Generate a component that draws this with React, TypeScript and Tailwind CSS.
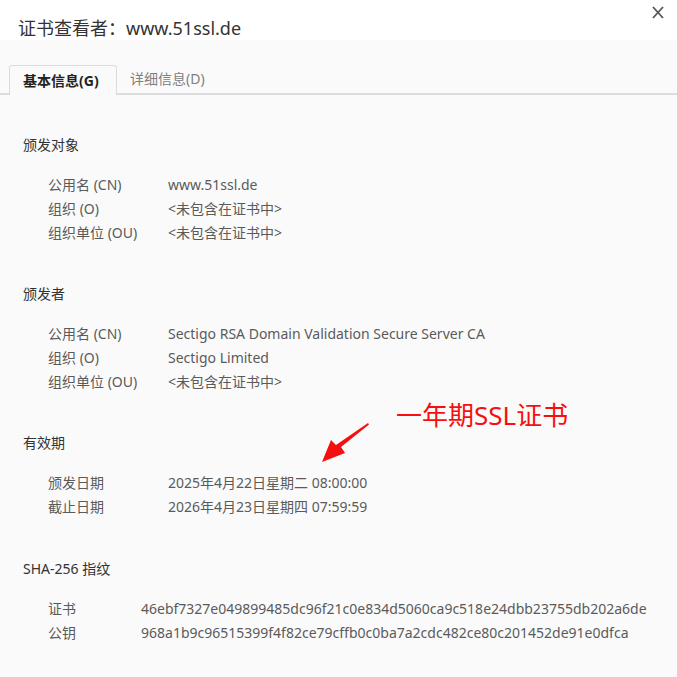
import React from "react";

type Row = { label: string; value: string };

const font = { fontFamily: '"Noto Sans", "Noto Sans CJK SC", sans-serif' };

const subject: Row[] = [
  { label: "公用名 (CN)", value: "www.51ssl.de" },
  { label: "组织 (O)", value: "<未包含在证书中>" },
  { label: "组织单位 (OU)", value: "<未包含在证书中>" },
];

const issuer: Row[] = [
  { label: "公用名 (CN)", value: "Sectigo RSA Domain Validation Secure Server CA" },
  { label: "组织 (O)", value: "Sectigo Limited" },
  { label: "组织单位 (OU)", value: "<未包含在证书中>" },
];

const validity: Row[] = [
  { label: "颁发日期", value: "2025年4月22日星期二 08:00:00" },
  { label: "截止日期", value: "2026年4月23日星期四 07:59:59" },
];

const sha: Row[] = [
  { label: "证书", value: "46ebf7327e049899485dc96f21c0e834d5060ca9c518e24dbb23755db202a6de" },
  { label: "公钥", value: "968a1b9c96515399f4f82ce79cffb0c0ba7a2cdc482ce80c201452de91e0dfca" },
];

function Section({ title, rows, labelW, className }: { title: string; rows: Row[]; labelW: string; className?: string }) {
  return (
    <div className={className}>
      <p className="text-[14px] leading-[24px] text-[#333]">{title}</p>
      <div className="mt-[16px] pl-[25px]">
        {rows.map((r) => (
          <div key={r.label} className="flex text-[14px] leading-[24px] text-[#5a5a5a] whitespace-nowrap">
            <span className={labelW}>{r.label}</span>
            <span>{r.value}</span>
          </div>
        ))}
      </div>
    </div>
  );
}

export default function App() {
  return (
    <div className="w-[677px] h-[677px] flex flex-col overflow-hidden bg-[#fafafa]" style={font}>
      {/* 标题栏 */}
      <div className="h-[40px] bg-white flex items-center justify-between pl-[18px] pr-[13px]">
        <h1 className="text-[18px] text-[#333] pt-[16px]">证书查看者：www.51ssl.de</h1>
        <svg width="12" height="13" viewBox="0 0 12 13" className="self-start mt-[6px]">
          <path d="M1 1 L11 12 M11 1 L1 12" stroke="#555" strokeWidth="1.8" fill="none" />
        </svg>
      </div>

      {/* 标签页 */}
      <div className="flex items-end px-[9px] pt-[23px] border-b-2 border-[#dcdcdc]">
        <div className="w-[108px] h-[30px] -mb-[2px] border border-b-0 border-[#dcdcdc] rounded-t-[3px] bg-[#fafafa] flex items-center pl-[13px] text-[14px] font-bold text-[#222]">
          基本信息(G)
        </div>
        <div className="h-[30px] flex items-center pl-[13px] text-[14px] text-[#808080]">详细信息(D)</div>
      </div>

      {/* 内容 */}
      <div className="relative flex-1 px-[23px] pt-[38px]">
        <Section title="颁发对象" rows={subject} labelW="w-[120px]" />
        <Section title="颁发者" rows={issuer} labelW="w-[120px]" className="mt-[37px]" />
        <Section title="有效期" rows={validity} labelW="w-[120px]" className="mt-[37px]" />
        <Section title="SHA-256 指纹" rows={sha} labelW="w-[93px]" className="mt-[38px]" />

        {/* 标注 */}
        <p className="absolute left-[396px] top-[302px] text-[26px] leading-[36px] text-[#f50f0f] whitespace-nowrap">
          一年期SSL证书
        </p>
        <svg className="absolute left-[318px] top-[327px]" width="56" height="42" viewBox="0 0 56 42">
          <path d="M50 1 L51 2.5 L23 25 L27 31 L4 40 L13 18 L18 23 Z" fill="#f50f0f" />
        </svg>
      </div>
    </div>
  );
}
